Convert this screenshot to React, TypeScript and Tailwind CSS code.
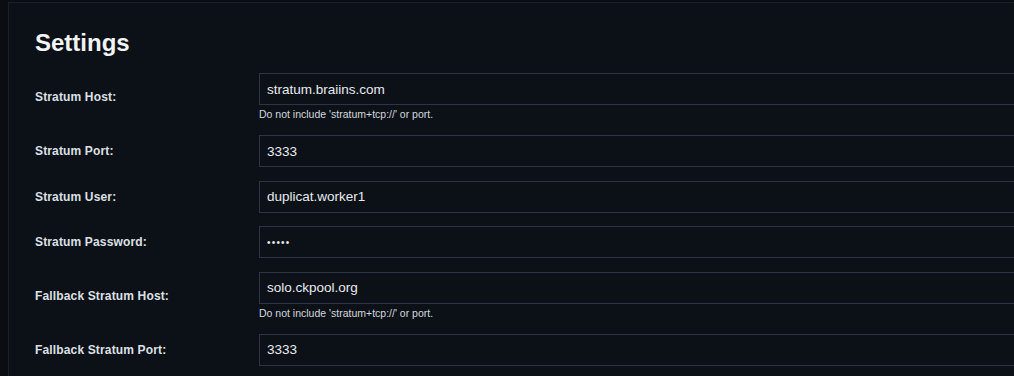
import React from "react";

type Field = { label: string; value: string; type?: string; help?: string };

const FIELDS: Field[] = [
  { label: "Stratum Host:", value: "stratum.braiins.com", help: "Do not include 'stratum+tcp://' or port." },
  { label: "Stratum Port:", value: "3333" },
  { label: "Stratum User:", value: "duplicat.worker1" },
  { label: "Stratum Password:", value: "12345", type: "password" },
  { label: "Fallback Stratum Host:", value: "solo.ckpool.org", help: "Do not include 'stratum+tcp://' or port." },
  { label: "Fallback Stratum Port:", value: "3333" },
];

function Row({ field }: { field: Field }) {
  const isPassword = field.type === "password";
  return (
    <div className="flex items-center">
      <label className="w-[224px] shrink-0 text-[12px] font-bold text-[#dce0e6] tracking-[0.15px]">
        {field.label}
      </label>
      <div className="flex-1 flex flex-col">
        <input
          readOnly
          type={field.type ?? "text"}
          value={field.value}
          className={
            isPassword
              ? "h-[32px] w-full border border-[#2b3546] bg-[#0c1118] px-[7px] text-[10px] tracking-[1.2px] text-[#e8ebef] outline-none"
              : "h-[32px] w-full border border-[#2b3546] bg-[#0c1118] px-[7px] text-[13.5px] text-[#e8ebef] outline-none"
          }
        />
        {field.help && (
          <span className="mt-[2px] h-[14.5px] text-[10.5px] leading-[14px] text-[#d3d8de]">{field.help}</span>
        )}
      </div>
    </div>
  );
}

export default function App() {
  return (
    <div
      className="h-[376px] w-full overflow-hidden bg-[#0a0d12] pl-[8px] pt-[2px]"
      style={{ fontFamily: "'Liberation Sans', Arial, sans-serif" }}
    >
      <div className="w-[1100px] h-[420px] border border-[#1a212c] bg-[#0c1118] pl-[26px] pr-[40px] pt-[24px]">
        <h1 className="h-[32px] text-[24px] font-bold leading-[32px] text-[#f1f3f5]">Settings</h1>
        <div className="mt-[14px] flex flex-col gap-[13.5px]">
          {FIELDS.map((f) => (
            <Row key={f.label} field={f} />
          ))}
        </div>
      </div>
    </div>
  );
}
